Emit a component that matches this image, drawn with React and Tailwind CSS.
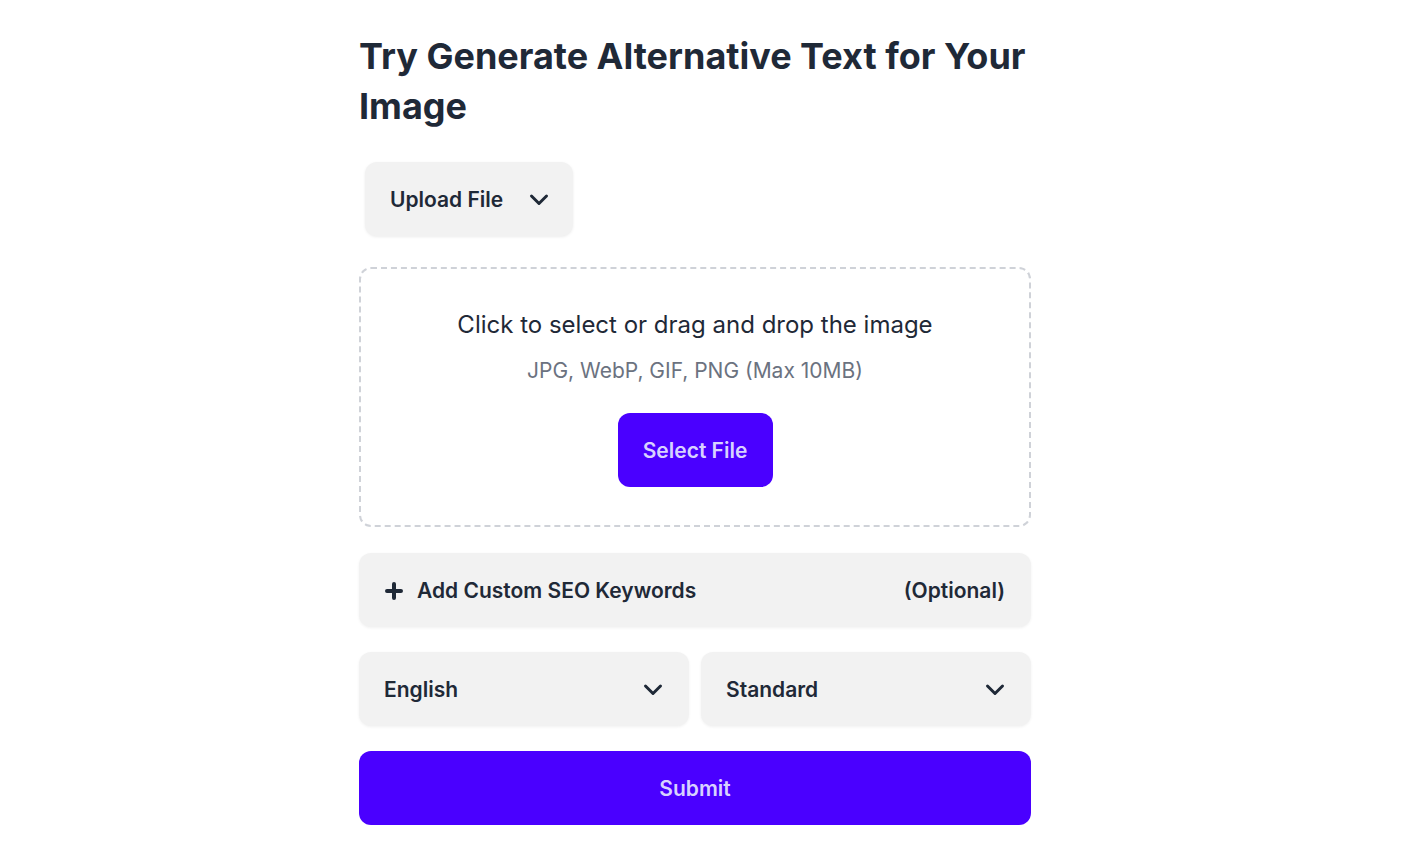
import { useState } from "react";

const Chevron = ({ className = "" }) => (
  <svg viewBox="0 0 20 14" fill="none" stroke="currentColor" strokeWidth="3" strokeLinecap="round" strokeLinejoin="round" className={className}>
    <path d="M2.5 3l7.5 7.5 7.5-7.5" />
  </svg>
);

const Plus = ({ className = "" }) => (
  <svg viewBox="0 0 18 18" fill="none" stroke="currentColor" strokeWidth="4" strokeLinecap="round" className={className}>
    <path d="M9 2v14M2 9h14" />
  </svg>
);

const SelectBox = ({ value }) => (
  <button className="flex-1 h-[74px] flex items-center justify-between pl-[25px] pr-[26px] pt-[2px] bg-[#f2f2f2] rounded-xl shadow-[0_1px_3px_rgba(0,0,0,0.06)] text-[21px] font-semibold text-[#1f2937]">
    <span>{value}</span>
    <Chevron className="w-[20px] h-[14px]" />
  </button>
);

export default function App() {
  const [showKeywords, setShowKeywords] = useState(false);

  return (
    <div className="min-h-screen bg-white pr-[21px] font-['Inter',sans-serif] text-[#1f2937]">
      <div className="w-[672px] mx-auto pt-[31px] pb-5">
        {/* Title */}
        <h1 className="text-[36px] leading-[50px] font-bold text-[#1f2937]">
          Try Generate Alternative Text for Your Image
        </h1>

        {/* Upload mode */}
        <button className="mt-[31px] ml-[6px] h-[74px] flex items-center gap-[26px] pl-[25px] pr-[24px] pt-[2px] bg-[#f2f2f2] rounded-xl shadow-[0_1px_3px_rgba(0,0,0,0.08)] text-[21px] font-semibold">
          Upload File
          <Chevron className="w-[20px] h-[14px]" />
        </button>

        {/* Drop zone */}
        <div className="mt-[31px] h-[260px] border-2 border-dashed border-[#cfd2d8] rounded-xl flex flex-col items-center pt-10">
          <p className="text-[24px] leading-8 text-[#1f2937]">Click to select or drag and drop the image</p>
          <p className="mt-4 text-[21px] leading-7 text-[#6b7280]">JPG, WebP, GIF, PNG (Max 10MB)</p>
          <button className="mt-7 h-[74px] w-[155px] pt-[2px] rounded-xl bg-[#4a00ff] text-[#d8d2ff] text-[21px] font-semibold">
            Select File
          </button>
        </div>

        {/* Keywords */}
        <button
          onClick={() => setShowKeywords(!showKeywords)}
          className="mt-[26px] w-full h-[74px] flex items-center justify-between pl-[26px] pr-[26px] pt-[2px] bg-[#f2f2f2] rounded-xl shadow-[0_1px_3px_rgba(0,0,0,0.06)] text-[21px] font-semibold"
        >
          <span className="flex items-center gap-[14px]">
            <Plus className="w-[18px] h-[18px]" />
            Add Custom SEO Keywords
          </span>
          <span>(Optional)</span>
        </button>

        {/* Options */}
        <div className="mt-[25px] flex gap-3">
          <SelectBox value="English" />
          <SelectBox value="Standard" />
        </div>

        <button className="mt-[25px] w-full h-[74px] pt-[2px] rounded-xl bg-[#4a00ff] text-[#d8d2ff] text-[21px] font-semibold">
          Submit
        </button>
      </div>
    </div>
  );
}
